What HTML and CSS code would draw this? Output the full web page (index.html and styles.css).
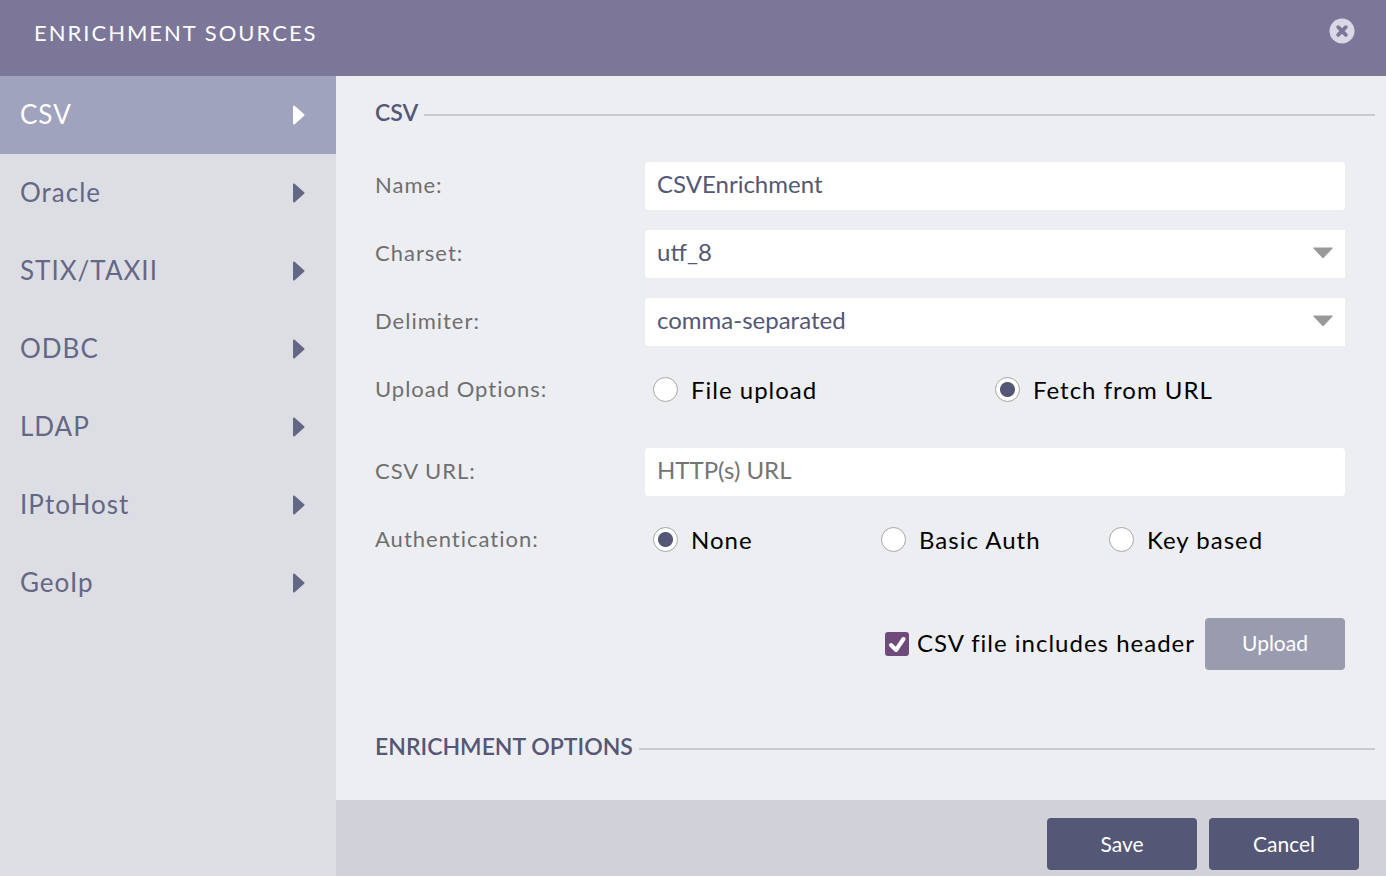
FILE: index.html
```html
<!DOCTYPE html>
<html lang="en">
<head>
    <meta charset="UTF-8">
    <meta name="viewport" content="width=device-width, initial-scale=1.0">
    <title>Enrichment Sources</title>
    <link rel="stylesheet" href="styles.css">
</head>
<body>
    <header class="header">
        <h1>ENRICHMENT SOURCES</h1>
        <button type="button" class="close" aria-label="Close">
            <svg viewBox="0 0 26 26" width="26" height="26">
                <circle cx="13" cy="13" r="12.5" fill="#dad8e4"/>
                <path d="M9.2 9.2l7.6 7.6M16.8 9.2l-7.6 7.6" stroke="#7c7799" stroke-width="3.8" stroke-linecap="round"/>
            </svg>
        </button>
    </header>

    <div class="layout">
        <nav class="sidebar">
            <a href="#csv" class="active">CSV <svg class="arrow" viewBox="0 0 12 20"><path d="M1 1.500v17l9.500-8.500z"/></svg></a>
            <a href="#oracle">Oracle <svg class="arrow" viewBox="0 0 12 20"><path d="M1 1.500v17l9.500-8.500z"/></svg></a>
            <a href="#stix">STIX/TAXII <svg class="arrow" viewBox="0 0 12 20"><path d="M1 1.500v17l9.500-8.500z"/></svg></a>
            <a href="#odbc">ODBC <svg class="arrow" viewBox="0 0 12 20"><path d="M1 1.500v17l9.500-8.500z"/></svg></a>
            <a href="#ldap">LDAP <svg class="arrow" viewBox="0 0 12 20"><path d="M1 1.500v17l9.500-8.500z"/></svg></a>
            <a href="#iptohost">IPtoHost <svg class="arrow" viewBox="0 0 12 20"><path d="M1 1.500v17l9.500-8.500z"/></svg></a>
            <a href="#geoip">GeoIp <svg class="arrow" viewBox="0 0 12 20"><path d="M1 1.500v17l9.500-8.500z"/></svg></a>
        </nav>

        <form class="main">
            <div class="content">
                <h2 class="section-title">CSV</h2>

                <div class="fields">
                    <div class="row">
                        <label class="label" for="name">Name:</label>
                        <input class="control" type="text" id="name" value="CSVEnrichment">
                    </div>
                    <div class="row">
                        <label class="label" for="charset">Charset:</label>
                        <div class="select">
                            <select class="control" id="charset">
                                <option>utf_8</option>
                            </select>
                            <svg class="caret" viewBox="0 0 20 12"><path d="M.5 0.500h19v1L10.500 11h-1L.5 1.500z"/></svg>
                        </div>
                    </div>
                    <div class="row">
                        <label class="label" for="delimiter">Delimiter:</label>
                        <div class="select">
                            <select class="control" id="delimiter">
                                <option>comma-separated</option>
                            </select>
                            <svg class="caret" viewBox="0 0 20 12"><path d="M.5 0.500h19v1L10.500 11h-1L.5 1.500z"/></svg>
                        </div>
                    </div>
                    <div class="row row-upload" role="radiogroup" aria-labelledby="upload-label">
                        <span class="label" id="upload-label">Upload Options:</span>
                        <div class="options two">
                            <label class="option"><input type="radio" name="upload"> File upload</label>
                            <label class="option"><input type="radio" name="upload" checked> Fetch from URL</label>
                        </div>
                    </div>
                    <div class="row">
                        <label class="label" for="url">CSV URL:</label>
                        <input class="control" type="text" id="url" placeholder="HTTP(s) URL">
                    </div>
                    <div class="row" role="radiogroup" aria-labelledby="auth-label">
                        <span class="label" id="auth-label">Authentication:</span>
                        <div class="options three">
                            <label class="option"><input type="radio" name="auth" checked> None</label>
                            <label class="option"><input type="radio" name="auth"> Basic Auth</label>
                            <label class="option"><input type="radio" name="auth"> Key based</label>
                        </div>
                    </div>
                </div>

                <div class="upload">
                    <label class="check">
                        <span class="checkbox">
                            <input type="checkbox" checked>
                            <svg class="tick" viewBox="0 0 24 24"><path d="M6 13l5 5 7.500-11"/></svg>
                        </span>
                        <span class="check-text">CSV file includes header</span>
                    </label>
                    <button type="button" class="btn btn-upload">Upload</button>
                </div>

                <h2 class="section-title">ENRICHMENT OPTIONS</h2>
            </div>

            <footer class="footer">
                <button type="submit" class="btn">Save</button>
                <button type="button" class="btn">Cancel</button>
            </footer>
        </form>
    </div>
</body>
</html>
```
FILE: styles.css
```css
* {
    box-sizing: border-box;
}
body {
    font-family: Avenir, Lato, sans-serif;
    background-color: #edeef2;
    margin: 0;
    min-height: 100vh;
    display: flex;
    flex-direction: column;
    letter-spacing: 1px;
}
input, select, button {
    font-family: inherit;
    margin: 0;
}
.header {
    display: flex;
    justify-content: space-between;
    align-items: flex-start;
    background: #7c7799;
    padding: 18px 31px 28px 34px;
}
.header h1 {
    color: white;
    font-size: 22px;
    line-height: 30px;
    font-weight: 400;
    letter-spacing: 2px;
    margin: 0;
}
.close {
    background: none;
    border: 0;
    padding: 0;
    height: 26px;
    cursor: pointer;
}
.close svg {
    display: block;
}
.layout {
    display: flex;
    flex: 1;
}
.sidebar {
    width: 336px;
    flex-shrink: 0;
    background: #dddee3;
}
.sidebar a {
    display: flex;
    justify-content: space-between;
    align-items: center;
    height: 78px;
    padding: 0 31px 2px 20px;
    color: #646786;
    font-size: 26px;
    text-decoration: none;
}
.sidebar a.active {
    background: #a0a3bd;
    color: white;
}
.arrow {
    width: 12px;
    height: 20px;
    margin-top: 2px;
    fill: currentColor;
    stroke: currentColor;
    stroke-width: 2;
    stroke-linejoin: round;
}
.main {
    flex: 1;
    display: flex;
    flex-direction: column;
}
.content {
    flex: 1;
    padding: 20px 11px 20px 39px;
}
.section-title {
    display: flex;
    align-items: center;
    gap: 6px;
    margin: 0;
    color: #545775;
    font-size: 23px;
    line-height: 32px;
    font-weight: 600;
    letter-spacing: 0;
}
.section-title::after {
    content: "";
    flex: 1;
    height: 2px;
    margin-top: 6px;
    background: #c9cacf;
}
.fields {
    display: flex;
    flex-direction: column;
    gap: 20px;
    margin: 34px 30px 0 0;
}
.row {
    display: grid;
    grid-template-columns: 270px 1fr;
    align-items: center;
    min-height: 48px;
}
.row-upload {
    margin-bottom: 14px;
}
.label {
    padding-bottom: 4px;
    color: #6f6f6f;
    font-size: 22px;
}
.control {
    display: block;
    width: 100%;
    height: 48px;
    border: 0;
    border-radius: 4px;
    padding: 0 12px 6px;
    background: white;
    color: #545775;
    font-size: 24px;
}
.control::placeholder {
    color: #757575;
    opacity: 1;
}
.select {
    position: relative;
}
.select .control {
    appearance: none;
    border-radius: 4px 0 0 4px;
}
.caret {
    position: absolute;
    right: 12px;
    top: 17px;
    width: 20px;
    height: 12px;
    fill: #999;
    pointer-events: none;
}
.options {
    display: grid;
    padding: 0 8px 2px;
}
.two {
    grid-template-columns: 1fr 1fr;
}
.three {
    grid-template-columns: repeat(3, 1fr);
}
.option {
    display: flex;
    align-items: center;
    gap: 13px;
    color: black;
    font-size: 24px;
}
.option input {
    appearance: none;
    width: 25px;
    height: 25px;
    border: 1px solid #a6a6a6;
    border-radius: 50%;
    background: white;
}
.option input:checked {
    background: radial-gradient(circle, #545775 7px, white 8px);
}
.upload {
    display: flex;
    justify-content: flex-end;
    align-items: center;
    gap: 10px;
    margin: 54px 30px 60px 0;
}
.check {
    display: flex;
    align-items: center;
    gap: 8px;
    font-size: 24px;
}
.check-text {
    padding-bottom: 4px;
}
.checkbox {
    position: relative;
    width: 24px;
    height: 24px;
}
.checkbox input {
    appearance: none;
    display: block;
    width: 24px;
    height: 24px;
    border-radius: 3px;
    background: #dddee3;
}
.checkbox input:checked {
    background: #6f4b7c;
}
.tick {
    position: absolute;
    inset: 0;
    fill: none;
    stroke: white;
    stroke-width: 4;
    stroke-linecap: round;
    stroke-linejoin: round;
    pointer-events: none;
}
.btn {
    width: 150px;
    height: 52px;
    border: 0;
    border-radius: 4px;
    padding: 0 0 2px;
    background: #545775;
    color: white;
    font-size: 21px;
    cursor: pointer;
}
.btn-upload {
    width: 140px;
    padding-bottom: 4px;
    background: #999bae;
}
.footer {
    display: flex;
    justify-content: flex-end;
    gap: 12px;
    padding: 18px 27px 6px;
    background: #d1d1da;
}
```
